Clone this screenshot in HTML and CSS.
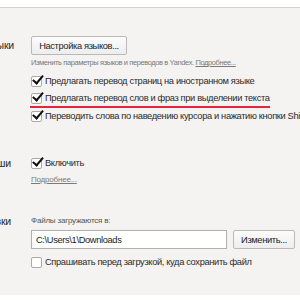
FILE: index.html
```html
<!doctype html>
<html lang="ru">
  <head>
    <meta charset="UTF-8">
    <title>Настройки</title>
    <link rel="stylesheet" href="styles.css">
  </head>
  <body>
    <main class="settings">
      <section class="group group-lang">
        <div class="label"><span>Языки</span></div>
        <div class="body">
          <button class="btn btn-lang">Настройка языков...</button>
          <p class="hint">Изменить параметры языков и переводов в Yandex. <a href="#">Подробнее...</a></p>
          <label class="check"><span class="box checked"></span>Предлагать перевод страниц на иностранном языке</label>
          <label class="check marked"><span class="box checked"></span>Предлагать перевод слов и фраз при выделении текста</label>
          <label class="check"><span class="box checked"></span>Переводить слова по наведению курсора и нажатию кнопки Shift</label>
        </div>
      </section>
      <section class="group group-mouse">
        <div class="label"><span>Жесты мыши</span></div>
        <div class="body">
          <label class="check"><span class="box checked"></span>Включить</label>
          <p class="more"><a href="#">Подробнее...</a></p>
        </div>
      </section>
      <section class="group group-load">
        <div class="label"><span>Загрузки</span></div>
        <div class="body">
          <p class="caption">Файлы загружаются в:</p>
          <div class="path-row">
            <input class="path" type="text" value="C:\Users\1\Downloads">
            <button class="btn btn-change">Изменить...</button>
          </div>
          <label class="check"><span class="box"></span>Спрашивать перед загрузкой, куда сохранить файл</label>
        </div>
      </section>
    </main>
  </body>
</html>
```

FILE: styles.css
```css
html, body {
  height: 100%
}
body {
  background-color: #fff;
  color: #2b2b2b;
  font-family: "Liberation Sans", Arial, sans-serif;
  font-size: 9.3px;
  letter-spacing: -0.35px;
  line-height: 11px;
  margin: 0;
  overflow: hidden
}
.settings {
  background-color: #f4f3f1;
  border-top: 1px solid #d2d1cf;
  height: 287px;
  margin-top: 7px;
  overflow: hidden
}
.group {
  display: flex
}
.label {
  display: flex;
  flex: 0 0 11px;
  font-size: 10.5px;
  justify-content: flex-end;
  letter-spacing: -0.2px;
  margin-right: 20px;
  overflow: hidden;
  white-space: nowrap
}
.body {
  flex: 1;
  min-width: 0;
  white-space: nowrap
}
.group-lang {
  padding-top: 28px
}
.group-lang .label {
  flex-basis: 14px;
  margin-right: 17px;
  padding-top: 4px
}
.group-mouse {
  padding-top: 30px
}
.group-mouse .label {
  padding-top: 3px
}
.group-load {
  padding-top: 32px
}
.btn {
  background: linear-gradient(#fcfcfc, #ededed);
  border: 1px solid #b9b9b9;
  border-radius: 2px;
  color: #222;
  font: 9.3px "Liberation Sans", Arial, sans-serif;
  height: 19px;
  letter-spacing: -0.35px;
  padding: 0
}
.btn-lang {
  width: 96px
}
.hint {
  color: #7a7a7a;
  font-size: 7.5px;
  letter-spacing: -0.4px;
  line-height: 9px;
  margin: 3px 0 6px
}
a, a:visited {
  color: #7a7a7a
}
.check {
  align-items: center;
  display: flex;
  height: 17px
}
.check.marked {
  border-bottom: 2px solid #e3263d;
  height: 16px;
  margin-left: -1px;
  padding-left: 1px;
  width: 239px
}
.box {
  background: #fff;
  border: 1px solid #a9a9a9;
  border-radius: 2px;
  box-sizing: border-box;
  flex: none;
  height: 11px;
  margin-right: 3px;
  position: relative;
  width: 11px
}
.box.checked::after {
  border: solid #111;
  border-width: 0 2px 2px 0;
  content: "";
  height: 9px;
  left: 3px;
  position: absolute;
  top: -4px;
  transform: rotate(40deg);
  width: 4px
}
.more {
  font-size: 8px;
  letter-spacing: -0.2px;
  line-height: 9px;
  margin: 3px 0 0
}
.caption {
  color: #555;
  font-size: 8px;
  letter-spacing: -0.2px;
  line-height: 9px;
  margin: 0 0 5px
}
.path-row {
  display: flex;
  gap: 6px;
  margin-bottom: 5px
}
.path {
  background: #fff;
  border: 1px solid #b0b0b0;
  box-sizing: border-box;
  color: #222;
  font: 9.3px "Liberation Sans", Arial, sans-serif;
  height: 19px;
  letter-spacing: -0.35px;
  padding: 0 4px;
  width: 196px
}
.btn-change {
  width: 62px
}
```
